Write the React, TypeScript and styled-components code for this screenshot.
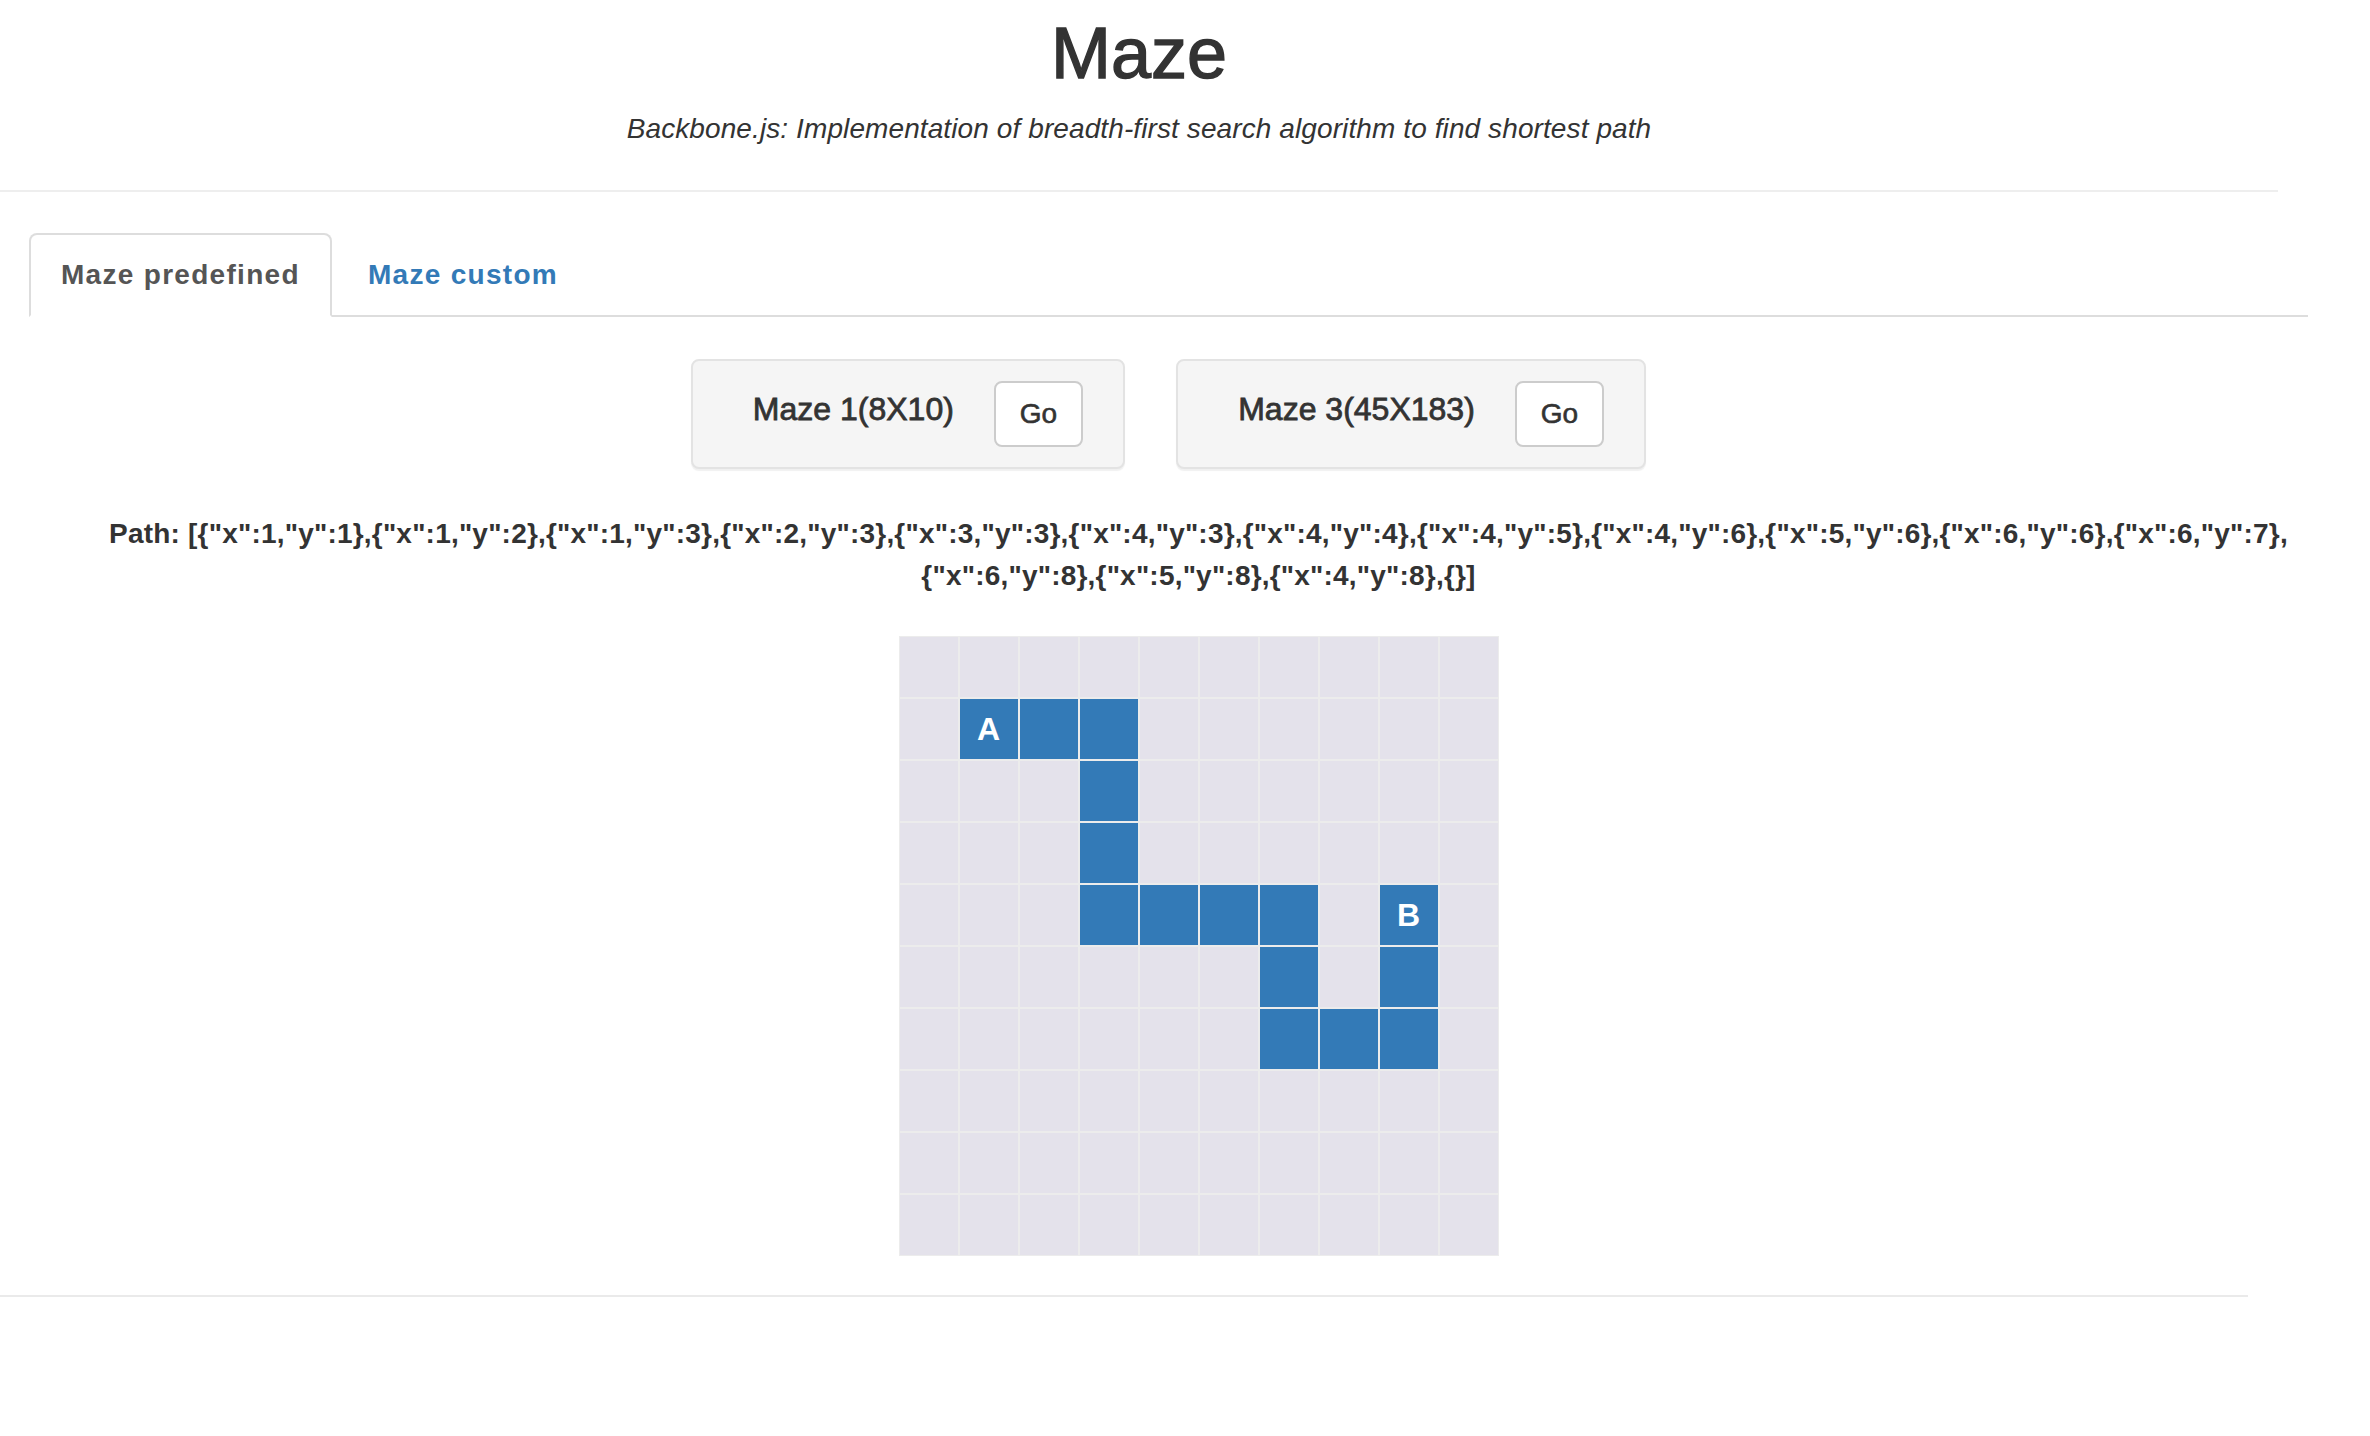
import styled, { createGlobalStyle } from "styled-components";

const GlobalStyle = createGlobalStyle`
  body {
    margin: 0;
    background: #ffffff;
    color: #333333;
    font-family: "Liberation Sans", Arial, Helvetica, sans-serif;
  }
`;

const PATH = [
  { x: 1, y: 1 },
  { x: 1, y: 2 },
  { x: 1, y: 3 },
  { x: 2, y: 3 },
  { x: 3, y: 3 },
  { x: 4, y: 3 },
  { x: 4, y: 4 },
  { x: 4, y: 5 },
  { x: 4, y: 6 },
  { x: 5, y: 6 },
  { x: 6, y: 6 },
  { x: 6, y: 7 },
  { x: 6, y: 8 },
  { x: 5, y: 8 },
  { x: 4, y: 8 },
];

const SIZE = 10;

const Page = styled.div`
  width: 100%;
`;

const Header = styled.header`
  width: 2278px;
  padding-top: 14px;
  text-align: center;
`;

const Title = styled.h1`
  margin: 0;
  font-size: 72px;
  line-height: 79px;
  font-weight: 500;
  -webkit-text-stroke: 1.4px #333333;
`;

const Subtitle = styled.p`
  margin: 16px 0 0;
  font-size: 28px;
  line-height: 40px;
  font-style: italic;
  letter-spacing: 0.1px;
`;

const Rule = styled.hr<{ $width: number; $top: number; $color: string }>`
  margin: ${({ $top }) => $top}px 0 0;
  width: ${({ $width }) => $width}px;
  border: 0;
  border-top: 2px solid ${({ $color }) => $color};
  height: 0;
`;

const Panel = styled.section`
  margin: 41px 0 0 29px;
  width: 2279px;
`;

const TabList = styled.ul`
  display: flex;
  margin: 0;
  padding: 0;
  list-style: none;
  border-bottom: 2px solid #dddddd;
`;

const TabItem = styled.li`
  margin: 0 4px -2px 0;
`;

const TabLink = styled.a<{ $active?: boolean }>`
  display: block;
  padding: 20px 30px;
  font-size: 28px;
  line-height: 40px;
  font-weight: 700;
  letter-spacing: 1.3px;
  text-decoration: none;
  border: 2px solid transparent;
  border-radius: 8px 8px 0 0;
  color: ${({ $active }) => ($active ? "#555555" : "#337ab7")};
  background: ${({ $active }) => ($active ? "#ffffff" : "transparent")};
  border-color: ${({ $active }) =>
    $active ? "#dddddd #dddddd transparent" : "transparent"};
  cursor: ${({ $active }) => ($active ? "default" : "pointer")};
`;

const CardRow = styled.div`
  display: flex;
  justify-content: center;
  gap: 51px;
  margin-top: 42px;
`;

const Card = styled.div`
  display: flex;
  align-items: center;
  gap: 40px;
  padding: 20px 40px 20px 60px;
  background: #f5f5f5;
  border: 2px solid #e3e3e3;
  border-radius: 8px;
  box-shadow: 0 2px 1px rgba(0, 0, 0, 0.06);
`;

const CardTitle = styled.h4`
  margin: 0 0 11px;
  font-size: 32px;
  line-height: 40px;
  font-weight: 500;
  -webkit-text-stroke: 0.8px #333333;
`;

const GoButton = styled.button`
  padding: 11px 24px;
  font-family: inherit;
  font-size: 28px;
  line-height: 40px;
  font-weight: 500;
  -webkit-text-stroke: 0.6px #333333;
  color: #333333;
  background: #ffffff;
  border: 2px solid #cccccc;
  border-radius: 8px;
`;

const Content = styled.div`
  padding-left: 60px;
`;

const PathText = styled.p`
  margin: 44px 0 0;
  text-align: center;
  font-size: 28px;
  line-height: 42px;
  font-weight: 700;
  letter-spacing: 0.2px;
`;

const MazeGrid = styled.div`
  display: grid;
  grid-template-columns: repeat(${SIZE}, 58px);
  grid-auto-rows: 60px;
  gap: 2px;
  width: max-content;
  padding: 1px;
  margin: 39px auto 0;
  background: #ececec;
`;

const Cell = styled.div<{ $on: boolean }>`
  display: flex;
  align-items: center;
  justify-content: center;
  background: ${({ $on }) => ($on ? "#337ab7" : "#e4e2eb")};
  color: #ffffff;
  font-size: 32px;
  font-weight: 700;
`;

export default function App() {
  const onPath = new Set(PATH.map((p) => `${p.x}-${p.y}`));
  const start = PATH[0];
  const end = PATH[PATH.length - 1];
  const pathLabel = JSON.stringify([...PATH, {}]);

  const cells = [];
  for (let r = 0; r < SIZE; r++) {
    for (let c = 0; c < SIZE; c++) {
      let label = "";
      if (r === start.x && c === start.y) label = "A";
      if (r === end.x && c === end.y) label = "B";
      cells.push(
        <Cell key={`${r}-${c}`} $on={onPath.has(`${r}-${c}`)}>
          {label}
        </Cell>
      );
    }
  }

  return (
    <Page>
      <GlobalStyle />
      <Header>
        <Title>Maze</Title>
        <Subtitle>
          Backbone.js: Implementation of breadth-first search algorithm to find
          shortest path
        </Subtitle>
      </Header>
      <Rule $width={2278} $top={41} $color="#eeeeee" />

      <Panel>
        <TabList>
          <TabItem>
            <TabLink $active>Maze predefined</TabLink>
          </TabItem>
          <TabItem>
            <TabLink href="#">Maze custom</TabLink>
          </TabItem>
        </TabList>

        <CardRow>
          <Card>
            <CardTitle>Maze 1(8X10)</CardTitle>
            <GoButton>Go</GoButton>
          </Card>
          <Card>
            <CardTitle>Maze 3(45X183)</CardTitle>
            <GoButton>Go</GoButton>
          </Card>
        </CardRow>

        <Content>
          <PathText>Path: {pathLabel}</PathText>
          <MazeGrid>{cells}</MazeGrid>
        </Content>
      </Panel>

      <Rule $width={2248} $top={39} $color="#eaeaea" />
    </Page>
  );
}
